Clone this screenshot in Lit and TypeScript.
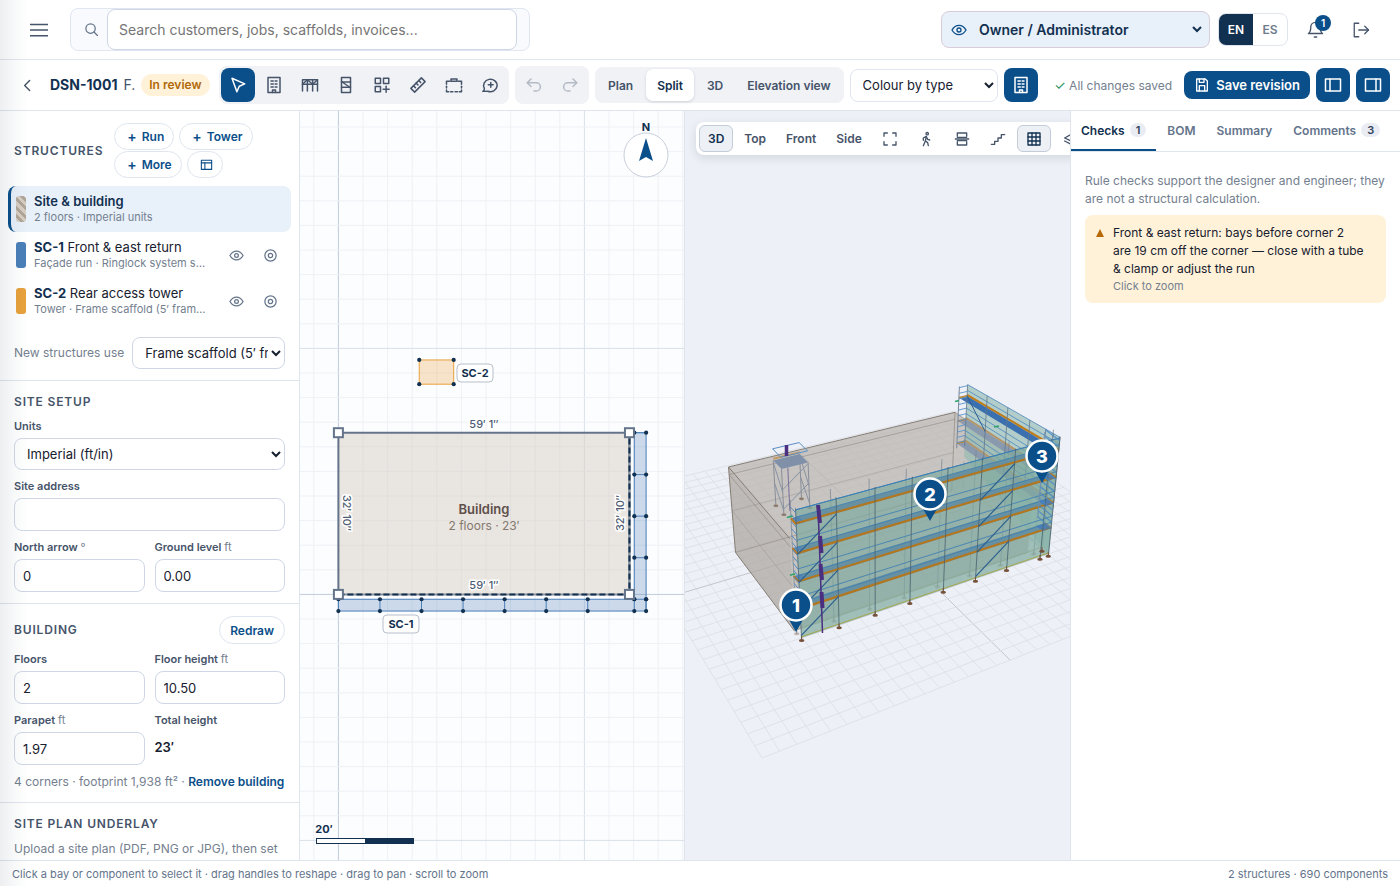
import { LitElement, html, svg, css } from "lit";
import { customElement } from "lit/decorators.js";
import { classMap } from "lit/directives/class-map.js";

type Pt = [number, number];

const ICONS: Record<string, string[]> = {
  menu: ["M0 4.5h24", "M0 12h24", "M0 19.5h24"],
  search: ["M3 10.5a7.5 7.5 0 1 0 15 0a7.5 7.5 0 1 0 -15 0", "M21.5 21.500l-5.500 -5.500"],
  eye: ["M1.500 12s4 -7 10.500 -7s10.500 7 10.500 7s-4 7 -10.500 7s-10.500 -7 -10.500 -7z", "M9 12a3 3 0 1 0 6 0a3 3 0 1 0 -6 0"],
  target: ["M3 12a9 9 0 1 0 18 0a9 9 0 1 0 -18 0", "M8.500 12a3.500 3.500 0 1 0 7 0a3.500 3.500 0 1 0 -7 0"],
  bell: ["M6 9a6 6 0 0 1 12 0c0 6 3 8 3 8h-18s3 -2 3 -8", "M10.500 21.500h3"],
  logout: ["M9 3h-6v18h6", "M9 12h13", "M17 7l5 5l-5 5"],
  back: ["M15 5l-7 7l7 7"],
  pointer: ["M4 3l6.500 18l3.200 -7.300l7.300 -3.200z"],
  building: ["M4 2h16v20h-16z", "M8 6.500h3", "M13.500 6.500h2.500", "M8 10.500h3", "M13.500 10.500h2.500", "M8 14.500h3", "M13.500 14.500h2.500", "M10 22v-3.500h4v3.500"],
  bays: ["M2 20v-15h20v15", "M2 11h20", "M8.500 5v15", "M15.500 5v15", "M2 11l6.500 -6l7 6l6.500 -6"],
  tower: ["M6 2h12v20h-12z", "M6 8h12", "M6 15h12", "M7 8l10 7"],
  components: ["M3 3h7v7h-7z", "M14 3h7v7h-7z", "M3 14h7v7h-7z", "M17.500 13.500v8", "M13.500 17.500h8"],
  ruler: ["M2.500 16.500l14 -14l5 5l-14 14z", "M13 6l2.500 2.500", "M9.500 9.500l2.500 2.500", "M6 13l2.500 2.500"],
  area: ["M2 11v-4h4.500", "M17.500 7h4.500v4", "M8 7v-3h8v3z", "M2 13.500v2.500", "M22 13.500v2.500", "M2 18.500v2.500h3", "M7.500 21h3", "M13.500 21h3", "M19 21h3v-2.500"],
  comment: ["M2.500 20.500c1.500 -1 2 -2.500 2 -4a9 8.300 0 1 1 4.500 3.800z", "M13 8.500v6.500", "M9.700 11.700h6.500"],
  undo: ["M8 4l-5 5l5 5", "M3 9h12a5 5 0 0 1 0 11h-3"],
  redo: ["M16 4l5 5l-5 5", "M21 9h-12a5 5 0 0 0 0 11h3"],
  save: ["M4 3h13l3 3v15h-16z", "M8 3v5h7v-5", "M8 21v-8h8v8"],
  panelLeft: ["M2 4h20v16h-20z", "M8 4v16"],
  panelRight: ["M2 4h20v16h-20z", "M16 4v16"],
  template: ["M2.500 4h19v17h-19z", "M2.500 9h19", "M9 9v12"],
  fit: ["M3 8v-5h5", "M16 3h5v5", "M21 16v5h-5", "M8 21h-5v-5"],
  walk: ["M12 4a1.800 1.800 0 1 0 3.600 0a1.800 1.800 0 1 0 -3.600 0", "M8 22l3 -7l1.500 -7l-4.500 2.500v3.500", "M12.500 8.500l2 4l3 1", "M11 15l3.500 2.500l1 4.500"],
  section: ["M5 8v-5h14v5", "M5 16v5h14v-5", "M2 12h20", "M5 9.500h14", "M5 14.500h14"],
  stairs: ["M2 20h5v-4.500h5v-5h5v-5h5"],
  grid: ["M3 3h18v18h-18z", "M3 9h18", "M3 15h18", "M9 3v18", "M15 3v18"],
  layers: ["M17 3l-13 7.500l13 6", "M4 15l13 6.500"],
};

const icon = (name: string, size = 18, width = 2) => html`
  <svg class="icon" width=${size} height=${size} viewBox="0 0 24 24" fill="none" stroke="currentColor"
    stroke-width=${width} stroke-linecap="round" stroke-linejoin="round" aria-hidden="true">
    ${ICONS[name].map((d) => svg`<path d=${d}></path>`)}
  </svg>`;

const range = (from: number, to: number, step = 1) => {
  const out: number[] = [];
  for (let v = from; v <= to + 1e-6; v += step) out.push(v);
  return out;
};

/* Layout of the design in metres, measured from the front-left corner. */
const BUILDING = { width: 18, depth: 10, height: 7 };
const FRONT_BAYS = [0, 2.57, 5.14, 7.71, 10.28, 12.85, 15.42, 18.3, 19.03];
const EAST_BAYS = [-1.03, -0.3, 2.27, 4.84, 7.41, 10];
const INNER = 0.3;
const OUTER = 1.03;
const TOWER = { x0: 5, x1: 7.13, y0: 13, y1: 14.5 };

@customElement("plan-view")
class PlanView extends LitElement {
  static styles = css`
    :host { display: block; position: relative; background: #fcfdff; overflow: hidden; min-width: 0; }
    svg { position: absolute; inset: 0; width: 100%; height: 100%; }
    text { font-family: Inter, sans-serif; text-anchor: middle; dominant-baseline: central; }
    .minor { stroke: #eef1f5; }
    .major { stroke: #d9e0e9; }
    .axis { stroke: #c0cbd8; }
    .dim { font-size: 11px; font-weight: 500; fill: #4f5d73; stroke: #fff; stroke-width: 3; paint-order: stroke; }
    .tag { font-size: 11px; font-weight: 700; fill: #12304f; }
    .tagbox { fill: #fff; stroke: #b7bfcb; }
    .name { font-size: 13px; font-weight: 600; fill: #5f504b; }
    .info { font-size: 12px; fill: #84786f; }
    .north { font-size: 11px; font-weight: 700; fill: #12304f; }
  `;

  render() {
    const K = 16.17;
    const X = (m: number) => 38.4 + m * K;
    const Y = (m: number) => 483.4 - m * K;
    const lines = (from: number, make: (p: number, c: string) => unknown) =>
      range(-30, 40).map((i) => make(from + i * 24.6, i === 0 ? "axis" : i % 10 === 0 ? "major" : "minor"));
    const dot = (x: number, y: number) => svg`<circle cx=${x} cy=${y} r="2.1" fill="#12304f"></circle>`;
    const knob = (x: number, y: number) =>
      svg`<rect x=${x - 4.5} y=${y - 4.5} width="9" height="9" fill="#fff" stroke="#64748b" stroke-width="2"></rect>`;
    const tag = (x: number, y: number, label: string) => svg`
      <rect class="tagbox" x=${x - 18} y=${y - 9} width="36" height="18" rx="4"></rect>
      <text class="tag" x=${x} y=${y}>${label}</text>`;
    const { width, depth } = BUILDING;
    return html`<svg viewBox="0 0 384 749" preserveAspectRatio="xMidYMid slice" role="img" aria-label="Site plan">
      ${lines(38.4, (p, c) => svg`<line class=${c} x1=${p} x2=${p} y1="-400" y2="1200"></line>`)}
      ${lines(483.4, (p, c) => svg`<line class=${c} y1=${p} y2=${p} x1="-600" x2="1000"></line>`)}

      <rect x=${X(0)} y=${Y(depth)} width=${width * K} height=${depth * K} fill="#d6cfc4" fill-opacity=".52"></rect>
      <path d="M${X(width)} ${Y(0)}V${Y(depth)}H${X(0)}V${Y(0)}" fill="none" stroke="#64748b" stroke-width="2"></path>
      <path d="M${X(0)} ${Y(0)}H${X(width)}V${Y(depth)}" fill="none" stroke="#8b929b" stroke-width="2"></path>
      <path d="M${X(0)} ${Y(0)}H${X(width)}V${Y(depth)}" fill="none" stroke="#12304f" stroke-width="2" stroke-dasharray="6 3"></path>

      <g fill="#4a7fb8" fill-opacity=".28" stroke="#4a7fb8" stroke-width="1">
        <path d="M${X(0)} ${Y(-INNER)}H${X(width + INNER)}V${Y(depth)}H${X(width + OUTER)}V${Y(-OUTER)}H${X(0)}Z"></path>
      </g>
      ${FRONT_BAYS.map((b) => svg`
        <line x1=${X(b)} x2=${X(b)} y1=${Y(-INNER)} y2=${Y(-OUTER)} stroke="#4a7fb8"></line>
        ${dot(X(b), Y(-INNER))}${dot(X(b), Y(-OUTER))}`)}
      ${EAST_BAYS.slice(1).map((b) => svg`
        <line x1=${X(width + INNER)} x2=${X(width + OUTER)} y1=${Y(b)} y2=${Y(b)} stroke="#4a7fb8"></line>
        ${dot(X(width + INNER), Y(b))}${dot(X(width + OUTER), Y(b))}`)}

      <rect x=${X(TOWER.x0)} y=${Y(TOWER.y1)} width=${(TOWER.x1 - TOWER.x0) * K} height=${(TOWER.y1 - TOWER.y0) * K}
        fill="#e8a13c" fill-opacity=".28" stroke="#e8a13c"></rect>
      ${[TOWER.x0, TOWER.x1].map((x) => [TOWER.y0, TOWER.y1].map((y) => dot(X(x), Y(y))))}

      ${[[0, 0], [width, 0], [0, depth], [width, depth]].map(([a, b]) => knob(X(a), Y(b)))}
      <text class="dim" x=${X(9)} y="313">59′ 1″</text>
      <text class="dim" x=${X(9)} y="474">59′ 1″</text>
      <text class="dim" transform="translate(47 402) rotate(90)">32′ 10″</text>
      <text class="dim" transform="translate(320 402) rotate(-90)">32′ 10″</text>
      <text class="name" x=${X(9)} y="398">Building</text>
      <text class="info" x=${X(9)} y="414">2 floors · 23′</text>
      ${tag(175, 262, "SC-2")}
      ${tag(101, 513, "SC-1")}

      <circle cx="346" cy="44" r="22" fill="#fff" fill-opacity=".9" stroke="#c7cfda"></circle>
      <path d="M346 27l7 23l-7 -4l-7 4z" fill="#0b4f8a"></path>
      <text class="north" x="346" y="16">N</text>

      <text class="north" x="24" y="718">20′</text>
      <rect x="16.500" y="727.500" width="49" height="5" fill="#fff" stroke="#12304f"></rect>
      <rect x="65" y="727" width="49" height="6" fill="#12304f"></rect>
    </svg>`;
  }
}

@customElement("model-view")
class ModelView extends LitElement {
  static styles = css`
    :host { display: block; position: relative; background: #edf0f6; overflow: hidden; min-width: 0; }
    .scene { position: absolute; inset: 0; width: 100%; height: 100%; }
    .pin { font: 800 18px Inter, sans-serif; fill: #fff; text-anchor: middle; dominant-baseline: central; }
    .bar {
      position: absolute; top: 11px; left: 11px; display: flex; gap: 2px; padding: 3px; box-sizing: border-box;
      background: #fff; border-radius: 8px; box-shadow: 0 3px 10px rgba(15, 35, 60, 0.12);
    }
    button {
      display: flex; align-items: center; justify-content: center; height: 27px; padding: 0 8px; min-width: 34px;
      border: 1px solid transparent; border-radius: 6px; background: none; color: #46546a;
      font: 600 12px Inter, sans-serif; white-space: nowrap; flex: none; box-sizing: border-box;
    }
    .on { background: #edf1f6; border-color: #c3ccd8; color: #12304f; }
    .icon { flex: none; }
  `;

  /* Perspective projection of a point in metres to scene units. */
  project(t: number, s: number, z: number): Pt {
    const w = 1 + 0.0091 * t + 0.015 * s - 0.009 * z;
    return [(762 + 24.7 * t + 4.02 * s - 7.9 * z) / w - 685, (758 - 0.11 * t - 1.05 * s - 20.5 * z) / w - 111];
  }

  at(x: number, y: number, z: number): Pt {
    return this.project(x + 5.85, y + 8.8, z);
  }

  path(points: number[][], close = false) {
    const parts = points.map(([x, y, z]) => this.at(x, y, z).map((v) => v.toFixed(1)).join(" "));
    return "M" + parts.join("L") + (close ? "Z" : "");
  }

  line(a: number[], b: number[], stroke: string, width = 1, opacity = 1) {
    return svg`<path d=${this.path([a, b])} stroke=${stroke} stroke-width=${width} stroke-opacity=${opacity} fill="none"></path>`;
  }

  face(points: number[][], fill: string, opacity = 1) {
    return svg`<path d=${this.path(points, true)} fill=${fill} fill-opacity=${opacity}></path>`;
  }

  ground() {
    const seg = (a: Pt, b: Pt, c: string) =>
      svg`<line x1=${a[0]} y1=${a[1]} x2=${b[0]} y2=${b[1]} stroke=${c}></line>`;
    const tint = (i: number) => (i === 16 ? "#c3c6cb" : "#dfe2e7");
    return [
      range(0, 32).map((i) => seg(this.project(i, 0, 0), this.project(i, 31, 0), tint(i))),
      range(0, 31).map((i) => seg(this.project(0, i, 0), this.project(32, i, 0), tint(i))),
    ];
  }

  tower() {
    const { x0, x1, y0, y1 } = TOWER;
    const legs = [[x0, y0], [x1, y0], [x1, y1], [x0, y1]];
    const g = "#8a8f98";
    return svg`<g>
      ${legs.map(([x, y]) => this.line([x, y, 0], [x, y, 4], g))}
      ${legs.map(([x, y]) => { const p = this.at(x, y, 0); return svg`<ellipse cx=${p[0]} cy=${p[1]} rx="2.500" ry="1.300" fill="#8d7a6c"></ellipse>`; })}
      ${this.line([x0, y0, 0.4], [x0, y1, 2], "#8893a2")}${this.line([x0, y0, 2], [x0, y1, 3.800], "#8893a2")}
      ${this.line([x0, y0, 0.500], [x1, y0, 2.200], "#8893a2")}${this.line([x0, y0, 2.200], [x1, y0, 3.900], "#8893a2")}
      ${this.line([x1, y0, 0.400], [x1, y1, 2], "#8893a2")}${this.line([x1, y0, 2], [x1, y1, 3.900], "#8893a2")}
      ${this.line([x0 + 0.500, y0, 0.200], [x0 + 0.500, y0, 4], "#7a6f98", 1)}
      ${this.line([x0, y1, 4.150], [x1, y1, 4.150], "#c39a62", 2)}
      ${this.face([[x0, y0, 4], [x1, y0, 4], [x1, y1, 4], [x0, y1, 4]], "#7f90a8")}
      <path d=${this.path([[x0, y0, 5], [x1, y0, 5], [x1, y1, 5], [x0, y1, 5]], true)} fill="none" stroke="#5b8fc4"></path>
      <path d="M101.500 334V345" stroke="#4b2f80" stroke-width="3.500"></path>
    </g>`;
  }

  building() {
    const { width: w, depth: d, height: h } = BUILDING;
    const edge = "#857d75";
    return svg`<g>
      ${this.face([[0, 0, 0], [0, d, 0], [0, d, h], [w, d, h], [w, 0, h], [w, 0, 0]], "#b6b0aa", 0.680)}
      ${this.face([[0, 0, 0], [0, d, 0], [0, d, h], [0, 0, h]], "#8f8983", 0.160)}
      ${this.line([0, d, 0], [0, d, h], edge)}
      ${this.line([0, d, h], [w, d, h], edge)}
      ${this.line([0, 0, h], [0, d, h], edge)}
      ${this.line([0, 0, 0], [0, d, 0], edge)}
      ${this.line([w, d, 0], [w, d, h], edge, 1, 0.600)}
      ${this.line([0, d, 0], [w, d, 0], edge, 1, 0.500)}
      ${this.line([w, 0, h], [w, d, h], edge, 1, 0.600)}
      ${this.line([0, d, 3.500], [w, d, 3.500], edge, 1, 0.300)}
      ${this.line([0, d, 6.400], [w, d, 6.400], edge, 1, 0.500)}
      ${this.line([0, 0, 6.400], [0, d, 6.400], edge, 1, 0.500)}
      ${this.line([0, 0, 3.500], [0, d, 3.500], edge, 1, 0.300)}
    </g>`;
  }

  east() {
    const xi = BUILDING.width + INNER;
    const xo = BUILDING.width + OUTER;
    const d = BUILDING.depth;
    const decks = [4.450, 6.500, 8.600];
    const p = (x: number, y: number, z: number) => [x, y, z * (1 - 0.005 * y)];
    return svg`<g>
      ${this.face([p(xo, -OUTER, 0.200), p(xo, d, 3), p(xo, d, 9.600), p(xo, -OUTER, 9.600)], "#8fb9ae", 0.620)}
      ${decks.map((z) => svg`
        ${this.face([p(xi, -OUTER, z), p(xo, -OUTER, z), p(xo, d, z), p(xi, d, z)], z > 8 ? "#3b70b0" : "#8696ae", z > 8 ? 1 : 0.900)}
        ${this.line(p(xo, -OUTER, z + 0.100), p(xo, d, z + 0.100), z > 8 ? "#c07a16" : "#b39468", 2)}
        ${this.line(p(xi, d, z), p(xo, d, z), "#c08a3c", 2)}
        ${[0.500, 1].map((r) => this.line(p(xo, -OUTER, z + r), p(xo, d, z + r), "#4b86bd", 1, 0.800))}`)}
      ${EAST_BAYS.map((b) => this.line(p(xo, b, 4), p(xo, b, 9.600), "#62778c", 1, 0.800))}
      ${this.line(p(xi, d, 4), p(xi, d, 9.600), "#7b8798")}
      ${this.line(p(xo, 7.410, 6.500), p(xo, d, 8.600), "#2d5f93")}
      ${range(4.500, 9.600, 0.500).map((z) => this.line(p(xi, d, z), p(xo, d, z), "#5b93c9", 1, 0.900))}
      <path d="M270 290.500l4 -1M309 316l5 -1" stroke="#2fa36b" stroke-width="1.500"></path>
    </g>`;
  }

  front() {
    const yi = -INNER;
    const yo = -OUTER;
    const end = BUILDING.width + OUTER;
    const xi = BUILDING.width + INNER;
    const decks = [2.400, 4.450, 6.500, 8.600];
    const plate = (x: number, y: number, o = 1) => {
      const [px, py] = this.at(x, y, 0);
      return svg`<g opacity=${o}><ellipse cx=${px} cy=${py} rx="2.700" ry="1.500" fill="#765139"></ellipse><path d="M${px} ${py}v-4" stroke="#765139"></path></g>`;
    };
    return svg`<g>
      ${FRONT_BAYS.map((b) => plate(b, yi, 0.350))}
      ${FRONT_BAYS.map((b) => this.line([b, yi, 0], [b, yi, 9.900], "#76838f", 1, 0.700))}
      ${EAST_BAYS.map((b) => this.line([end, b, 0], [end, b, 2.500], "#8a9690", 1, 0.400))}
      ${this.line([end, yi, 0.300], [end, 8, 0.300], "#b5b06a", 1, 0.600)}
      ${this.line([0, yi, 0.350], [end, yi, 0.350], "#a8a06a", 1, 0.700)}
      ${this.face([[0, yo, 0.200], [end, yo, 0.200], [end, yo, 9.600], [0, yo, 9.600]], "#7faaa0", 0.700)}
      ${this.face([[end, yo, 0.200], [end, 3.500, 0.200], [end, 3.500, 3], [end, yo, 3]], "#8fb9ae", 0.350)}
      ${this.line([0, yo, 0.300], [end, yo, 0.300], "#a9a544", 1, 0.900)}
      ${decks.map((z) => svg`
        ${this.face([[0, yi, z], [end, yi, z], [end, yo, z], [0, yo, z]], "#5f8ca2", 0.850)}
        ${this.face([[0, yi, z], [0.500, yi, z], [0.500, yo, z], [0, yo, z]], "#4a7fc0", 0.600)}
        ${[0.500, 1].map((r) => this.line([0, yo, z + r], [end, yo, z + r], "#3e80b4", 1, 0.850))}
        ${this.line([0, yi, z], [0, yo, z], "#c07a16", 2)}
        ${this.line([0, yo, z + 0.080], [end, yo, z + 0.080], "#b3771f", 2.200)}
        ${this.line([end, yi, z], [end, yo, z], "#c07a16", 2)}
        ${this.face([[xi, yi, z], [end, yi, z], [end, yo, z], [xi, yo, z]], "#3f78bd", 0.700)}`)}
      ${this.line([0, yo, 9.600], [end, yo, 9.600], "#3e80b4")}
      ${FRONT_BAYS.map((b) => this.line([b, yo, 0], [b, yo, 9.700], "#4d6672", 1, 0.850))}
      ${[0, 5].map((i) => [0.400, ...decks.slice(0, 3)].map((z) =>
        this.line([FRONT_BAYS[i], yo, z], [FRONT_BAYS[i + 1], yo, z + 2.050], "#2b608e", 1.200)))}
      ${FRONT_BAYS.map((b) => plate(b, yo))}
      ${plate(end, yi)}
      ${range(0.900, 9.600, 0.500).map((z) => svg`
        ${z > 1.500 ? this.line([0, yi, z], [0, yo, z], "#4a86c4", 1, 0.900) : ""}
        ${z > 2 ? this.line([end, yo, z], [end, 0.500, z + 0.100], "#4a86c4", 1.200, 0.850) : ""}`)}
      ${this.line([end, 0.500, 2.400], [end, 0.500, 9.600], "#6b8fb5")}
      ${[4.450, 8.600].map((z) => this.line([0.100, yi, z + 0.150], [-0.250, yi, z + 0.150], "#2fa36b", 1.500))}
      <g stroke="#4b2f80" stroke-width="4">
        <path d="M133 394L135 412M135 425L136.500 442M135.500 453L137 469M136.500 481L137.500 497"></path>
        <path d="M133 394L137.500 522" stroke-width="1.500"></path>
      </g>
    </g>`;
  }

  pin(x: number, y: number, label: string) {
    return svg`<g>
      <path d="M${x - 8} ${y + 13}h16l-8 14z" fill="#0b4f8a"></path>
      <circle cx=${x} cy=${y} r="15.500" fill="#0b4f8a" stroke="#fff" stroke-width="2.500"></circle>
      <text class="pin" x=${x} y=${y}>${label}</text>
    </g>`;
  }

  render() {
    const views = ["3D", "Top", "Front", "Side"];
    const tools: [string, string][] = [
      ["fit", "Fit"], ["walk", "Walk"], ["section", "Section"], ["stairs", "Stairs"], ["grid", "Grid"], ["layers", "Layers"],
    ];
    return html`
      <svg class="scene" viewBox="0 0 385 749" preserveAspectRatio="xMidYMid slice" role="img" aria-label="3D model">
        ${this.ground()}${this.building()}${this.tower()}${this.east()}${this.front()}
        ${this.pin(111, 494, "1")}${this.pin(245, 383, "2")}${this.pin(357, 345, "3")}
      </svg>
      <div class="bar">
        ${views.map((v) => html`<button class=${classMap({ on: v === "3D" })}>${v}</button>`)}
        ${tools.map(([n, l]) => html`<button class=${classMap({ on: n === "grid" })} aria-label=${l}>${icon(n, 16)}</button>`)}
      </div>`;
  }
}

@customElement("app-root")
class AppRoot extends LitElement {
  static styles = css`
    :host {
      display: grid; grid-template-columns: minmax(0, 1fr); grid-template-rows: 60px 51px minmax(0, 1fr) 26px; height: 100vh;
      position: relative; overflow: hidden; background: #fff; color: #17202e; font: 13px/18px Inter, sans-serif;
    }
    * { box-sizing: border-box; }
    button, select, input { font-family: inherit; margin: 0; }
    button { cursor: pointer; border: 0; background: none; padding: 0; color: inherit; }
    .icon { display: block; flex: none; }
    .edge {
      position: absolute; inset: 0 auto 0 0; width: 28px; pointer-events: none;
      background: linear-gradient(90deg, rgba(15, 40, 60, 0.08), rgba(15, 40, 60, 0.03) 50%, rgba(15, 40, 60, 0));
    }

    .top { display: flex; align-items: center; padding: 0 20px; border-bottom: 1px solid #e2e6ee; color: #46546a; }
    .square { width: 38px; height: 38px; display: grid; place-items: center; }
    .search {
      display: flex; align-items: center; width: 460px; height: 43px; margin-left: 12px; padding: 0 12px 0 13px; gap: 8px;
      background: #f8fafd; border: 1px solid #e0e6f0; border-radius: 8px; color: #64748b;
    }
    .search input {
      flex: 1; min-width: 0; height: 41px; padding: 0 11px; font-size: 14px; color: #17202e;
      background: #fff; border: 1px solid #cfd7e6; border-radius: 8px;
    }
    .search input::placeholder { color: #757575; }
    .grow { flex: 1; }
    .role {
      display: flex; align-items: center; width: 269px; height: 37px; padding: 0 4px 0 9px; gap: 8px;
      background: #e8f0fa; border: 1px solid #d9ccd9; border-radius: 8px; color: #0b4f8a;
    }
    .role select { flex: 1; background: transparent; border: 0; font-size: 14px; font-weight: 600; color: #12304f; }
    .lang { display: flex; height: 33px; margin: 0 8px; border: 1px solid #dfe4ed; border-radius: 8px; overflow: hidden; }
    .lang button { width: 34px; font-size: 12px; font-weight: 600; color: #6f7c8d; }
    .lang .on { background: #12304f; color: #fff; }
    .bell { position: relative; }
    .count {
      position: absolute; top: 4px; right: 3px; width: 16px; height: 16px; border-radius: 8px; background: #0b4f8a;
      color: #fff; font-size: 10px; line-height: 16px; font-weight: 600; text-align: center;
    }
    .out { margin-left: 8px; }

    .tools { display: flex; align-items: center; gap: 6px; padding: 0 10px; border-bottom: 1px solid #dfe4ed; color: #46546a; }
    .tool { width: 34px; height: 34px; display: grid; place-items: center; border-radius: 8px; flex: none; }
    .tool.on, .blue { background: #0b4f8a; color: #fff; }
    .name { display: flex; align-items: center; gap: 6px; width: 157px; margin-right: 6px; font-size: 14px; white-space: nowrap; }
    .name b { font-weight: 700; color: #12304f; }
    .status { margin-left: auto; padding: 2px 8px; border-radius: 11px; background: #fff2d9; color: #b0690a; font-size: 12px; font-weight: 600; }
    .group { display: flex; gap: 2px; padding: 2px; background: #f0f2f6; border-radius: 8px; }
    .group.faded { color: #b3bac5; }
    .seg { display: flex; gap: 2px; padding: 2px; height: 36px; background: #f0f2f6; border-radius: 8px; }
    .seg button { padding: 0 11px; font-size: 12px; font-weight: 600; border-radius: 7px; white-space: nowrap; }
    .seg .on { background: #fff; color: #12304f; box-shadow: 0 1px 3px rgba(15, 35, 60, 0.15); }
    .colour { width: 148px; height: 33px; padding: 0 0 0 8px; font-size: 13px; color: #17202e; background: #fff; border: 1px solid #dfe5ee; border-radius: 8px; }
    .saved { margin-right: 6px; font-size: 12px; color: #74808f; white-space: nowrap; }
    .saved i { color: #1e8f5f; font-style: normal; font-size: 13px; }
    .save {
      display: flex; align-items: center; gap: 6px; height: 28px; padding: 0 10px; border-radius: 8px; font-size: 13px; font-weight: 600;
      white-space: nowrap;
    }

    main { display: grid; grid-template-columns: 300px minmax(0, 1fr) minmax(0, 1fr) 330px; min-height: 0; }
    .side { border-right: 1px solid #dfe4ed; overflow: hidden; min-height: 0; }
    section { padding: 12px 14px 11px; border-bottom: 1px solid #dfe4ed; }
    section:last-child { border: 0; padding-bottom: 0; }
    h2 { margin: 0; font-size: 12px; line-height: 18px; font-weight: 600; letter-spacing: 0.07em; color: #46546a; text-transform: uppercase; }
    .head { display: flex; align-items: center; justify-content: space-between; margin-bottom: 7px; }
    .head.start { justify-content: flex-start; gap: 11px; }
    .pills { display: flex; flex-wrap: wrap; gap: 1px 5px; }
    .pill {
      display: flex; align-items: center; gap: 5px; height: 27px; padding: 0 9px 0 12px; border: 1px solid #dfe5ee; border-radius: 14px;
      background: #fff; color: #0b4f8a; font-size: 12px; font-weight: 600;
    }
    .pill b { font-size: 14px; font-weight: 600; }
    .pill.tall { height: 28px; padding: 0 10px; }
    .list { display: flex; flex-direction: column; margin: 8px -6px 13px; list-style: none; padding: 0; }
    .item { display: flex; align-items: center; gap: 8px; height: 46px; padding: 0 4px 0 5px; border-left: 3px solid transparent; border-radius: 8px; }
    .item.on { background: #e8f0fa; border-left-color: #0b4f8a; }
    .item.on .label { color: #12304f; font-weight: 600; }
    .swatch { width: 10px; height: 26px; border-radius: 3px; flex: none; }
    .swatch.site { background: repeating-linear-gradient(45deg, #d6cdc2 0 3px, #b0a698 3px 6px); }
    .swatch.run { background: #4a7fb8; }
    .swatch.tower { background: #e8a13c; }
    .what { flex: 1; min-width: 0; }
    .label, .sub { overflow: hidden; text-overflow: ellipsis; white-space: nowrap; }
    .label { font-size: 13px; line-height: 17px; }
    .label b { color: #12304f; font-weight: 700; }
    .sub { font-size: 11px; line-height: 15px; color: #74808f; }
    .acts { display: flex; flex: none; }
    .act { width: 34px; height: 30px; display: grid; place-items: center; color: #64748b; }
    .inline { display: flex; align-items: center; gap: 8px; font-size: 12px; color: #74808f; white-space: nowrap; }
    .inline select { flex: 1; min-width: 0; }
    .box {
      display: block; width: 100%; height: 33px; padding: 0 8px; font-size: 13px; color: #17202e; background: #fff;
      border: 1px solid #cfd7e6; border-radius: 8px;
    }
    select.box { height: 32px; padding: 0 0 0 8px; }
    .field { display: block; margin-bottom: 8px; font-size: 11px; line-height: 16px; font-weight: 600; color: #46546a; }
    .field .box { margin-top: 4px; font-weight: 400; }
    .field span { font-weight: 400; color: #74808f; }
    .field output { display: block; margin-top: 4px; font-size: 13px; line-height: 31px; font-weight: 600; color: #17202e; }
    .pair { display: grid; grid-template-columns: 1fr 1fr; column-gap: 10px; }
    .last { margin-bottom: 0; }
    .note { margin: 0; font-size: 12px; line-height: 18px; color: #74808f; }
    .note a { color: #0b4f8a; font-weight: 600; text-decoration: none; white-space: nowrap; }
    .oneline { white-space: nowrap; }
    plan-view { border-right: 1px solid #dfe4ed; }

    .info { border-left: 1px solid #dfe4ed; min-width: 0; overflow: hidden; }
    nav { display: flex; gap: 1px; height: 41px; border-bottom: 1px solid #dfe4ed; }
    nav button {
      display: flex; align-items: center; gap: 5px; padding: 0 10px; font-size: 12px; font-weight: 600; color: #64748b;
      border-bottom: 2px solid transparent; white-space: nowrap;
    }
    nav .on { color: #12304f; border-bottom-color: #0b4f8a; }
    nav em { padding: 0 6px; border-radius: 7px; background: #e9edf3; color: #33425a; font-size: 11px; line-height: 14px; font-style: normal; }
    .checks { padding: 20px 14px; }
    .alert {
      display: flex; gap: 8px; width: 100%; margin-top: 7px; padding: 9px 10px; border-radius: 8px; background: #fff2d9;
      font-size: 12px; line-height: 18px; text-align: left; color: #17202e;
    }
    .alert svg { flex: none; margin-top: 4px; }
    .alert small { display: block; font-size: 11px; line-height: 16px; color: #74808f; }
    footer { display: flex; justify-content: space-between; align-items: center; padding: 0 12px; border-top: 1px solid #dfe4ed; font-size: 11px; color: #64748b; }
  `;

  render() {
    const tools = ["pointer", "building", "bays", "tower", "components", "ruler", "area", "comment"];
    const row = (kind: string, code: string, label: string, sub: string) => html`
      <li class="item">
        <span class="swatch ${kind}"></span>
        <div class="what"><div class="label"><b>${code}</b> ${label}</div><div class="sub">${sub}</div></div>
        <div class="acts">
          <button class="act" aria-label="Show ${code}">${icon("eye", 15)}</button>
          <button class="act" aria-label="Isolate ${code}">${icon("target", 15)}</button>
        </div>
      </li>`;
    const field = (label: string, unit: string, value: string, last = false) => html`
      <label class=${classMap({ field: true, last })}>${label} <span>${unit}</span><input class="box" .value=${value}></label>`;
    return html`
      <header class="top">
        <button class="square" aria-label="Menu">${icon("menu", 18, 2)}</button>
        <label class="search">${icon("search", 15)}<input aria-label="Search" placeholder="Search customers, jobs, scaffolds, invoices..."></label>
        <span class="grow"></span>
        <label class="role">${icon("eye", 16)}<select aria-label="Role"><option>Owner / Administrator</option></select></label>
        <div class="lang"><button class="on">EN</button><button>ES</button></div>
        <button class="square bell" aria-label="Notifications">${icon("bell", 19, 1.700)}<span class="count">1</span></button>
        <button class="square out" aria-label="Log out">${icon("logout", 18, 1.700)}</button>
      </header>

      <div class="tools">
        <button class="tool" aria-label="Back">${icon("back", 17)}</button>
        <div class="name"><b>DSN-1001</b><span>F.</span><span class="status">In review</span></div>
        <div class="group">${tools.map((t) => html`<button class=${classMap({ tool: true, on: t === "pointer" })} aria-label=${t}>${icon(t)}</button>`)}</div>
        <div class="group faded">
          <button class="tool" aria-label="Undo">${icon("undo")}</button><button class="tool" aria-label="Redo">${icon("redo")}</button>
        </div>
        <div class="seg"><button>Plan</button><button class="on">Split</button><button>3D</button><button>Elevation view</button></div>
        <select class="colour" aria-label="Colouring"><option>Colour by type</option></select>
        <button class="tool blue" aria-label="Show building">${icon("building")}</button>
        <span class="grow"></span>
        <span class="saved"><i>✓</i> All changes saved</span>
        <button class="save blue">${icon("save", 16)} Save revision</button>
        <button class="tool blue" aria-label="Left panel">${icon("panelLeft")}</button>
        <button class="tool blue" aria-label="Right panel">${icon("panelRight")}</button>
      </div>

      <main>
        <aside class="side">
          <section>
            <div class="head start">
              <h2>Structures</h2>
              <div class="pills">
                <button class="pill"><b>+</b>Run</button><button class="pill"><b>+</b>Tower</button>
                <button class="pill"><b>+</b>More</button><button class="pill" aria-label="Templates">${icon("template", 13)}</button>
              </div>
            </div>
            <ul class="list">
              <li class="item on">
                <span class="swatch site"></span>
                <div class="what"><div class="label">Site &amp; building</div><div class="sub">2 floors · Imperial units</div></div>
              </li>
              ${row("run", "SC-1", "Front & east return", "Façade run · Ringlock system scaffold")}
              ${row("tower", "SC-2", "Rear access tower", "Tower · Frame scaffold (5′ frames)")}
            </ul>
            <label class="inline">New structures use<select class="box"><option>Frame scaffold (5′ frames)</option></select></label>
          </section>
          <section>
            <div class="head"><h2>Site setup</h2></div>
            <label class="field">Units<select class="box"><option>Imperial (ft/in)</option></select></label>
            <label class="field">Site address<input class="box"></label>
            <div class="pair">${field("North arrow", "°", "0", true)}${field("Ground level", "ft", "0.00", true)}</div>
          </section>
          <section>
            <div class="head"><h2>Building</h2><button class="pill tall">Redraw</button></div>
            <div class="pair">
              ${field("Floors", "", "2")}${field("Floor height", "ft", "10.50")}${field("Parapet", "ft", "1.97")}
              <label class="field">Total height<output>23′</output></label>
            </div>
            <p class="note oneline">4 corners · footprint 1,938 ft² · <a href="#">Remove building</a></p>
          </section>
          <section>
            <div class="head"><h2>Site plan underlay</h2></div>
            <p class="note">Upload a site plan (PDF, PNG or JPG), then set</p>
          </section>
        </aside>
        <plan-view></plan-view>
        <model-view></model-view>
        <aside class="info">
          <nav>
            <button class="on">Checks <em>1</em></button><button>BOM</button><button>Summary</button><button>Comments <em>3</em></button>
          </nav>
          <div class="checks">
            <p class="note">Rule checks support the designer and engineer; they are not a structural calculation.</p>
            <button class="alert">
              <svg width="10" height="10" viewBox="0 0 10 10" aria-hidden="true"><path d="M5 1L9 9H1z" fill="#b8690a"></path></svg>
              <span>Front &amp; east return: bays before corner 2 are&nbsp;19&nbsp;cm off the corner — close with a tube &amp;&nbsp;clamp or adjust the run<small>Click to zoom</small></span>
            </button>
          </div>
        </aside>
      </main>

      <footer><span>Click a bay or component to select it · drag handles to reshape · drag to pan · scroll to zoom</span><span>2 structures · 690 components</span></footer>
      <div class="edge"></div>`;
  }
}
